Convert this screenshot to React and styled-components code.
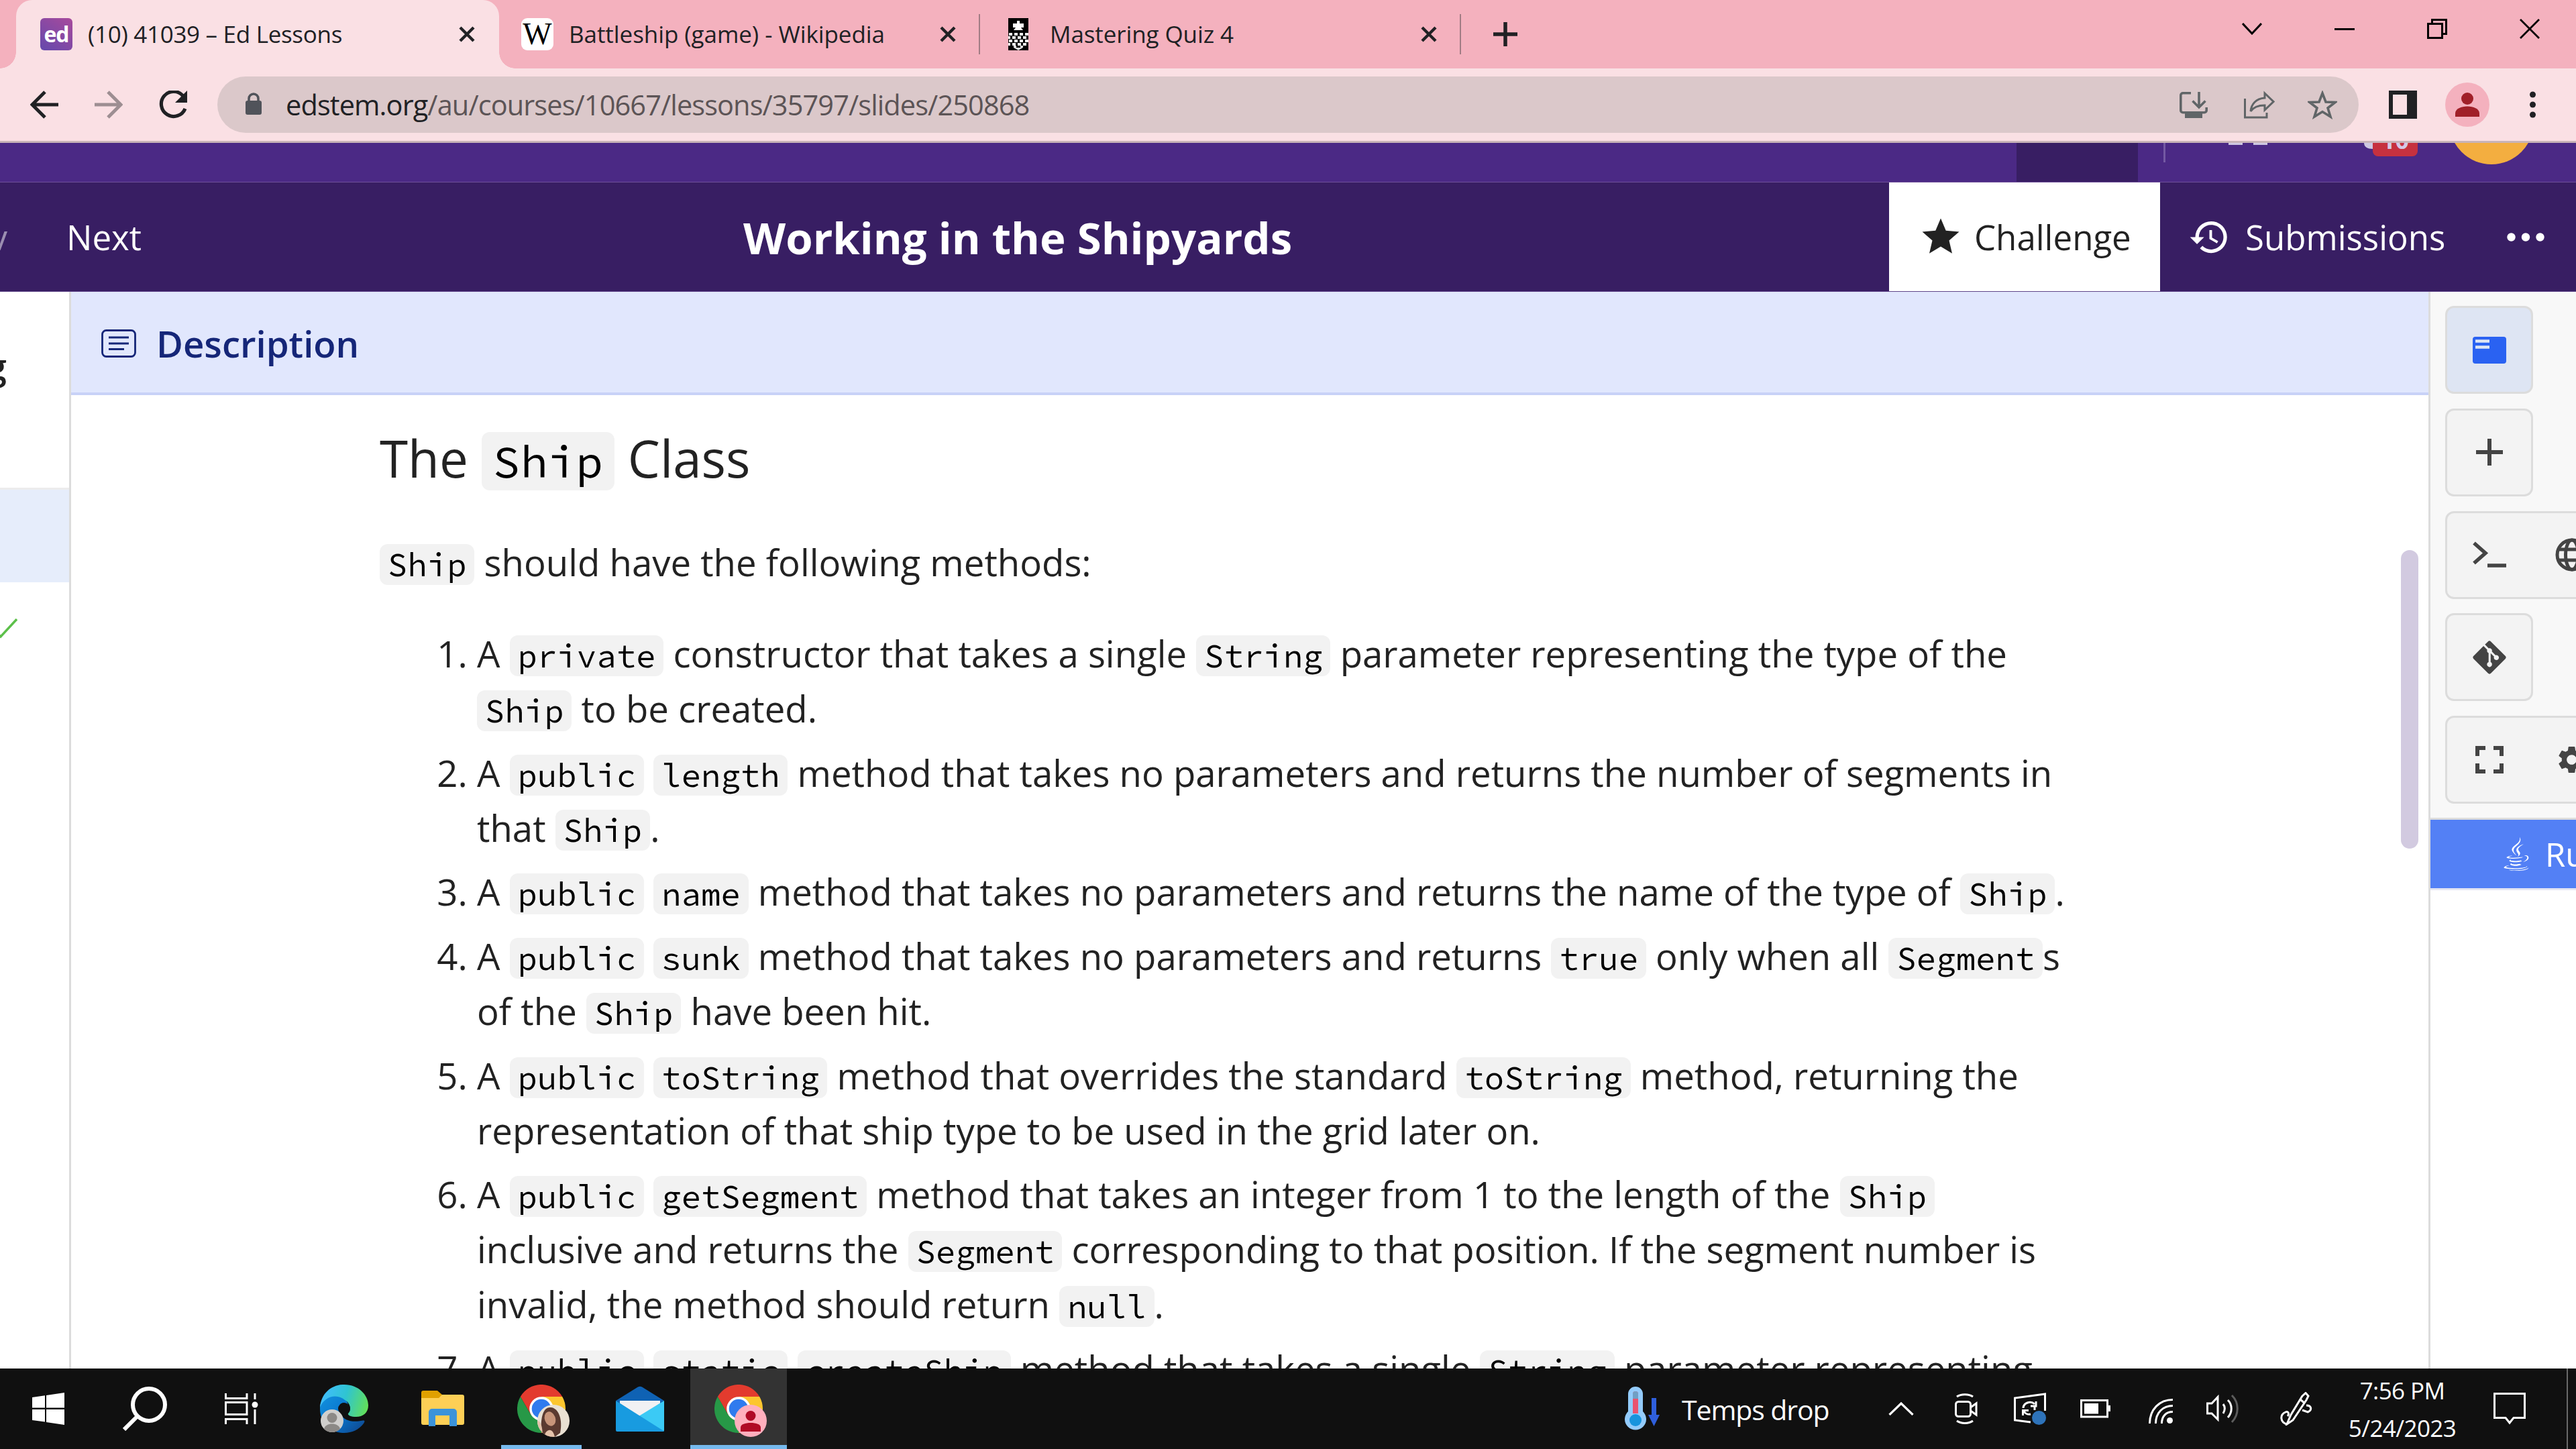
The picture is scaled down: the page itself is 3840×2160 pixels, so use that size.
import React from "react";
import styled, { createGlobalStyle, css } from "styled-components";
import { MdStar, MdHistory, MdSettings } from "react-icons/md";
import { FaGitAlt, FaJava } from "react-icons/fa";

const GlobalStyle = createGlobalStyle`
  * { box-sizing: border-box; }
  html, body { margin: 0; padding: 0; }
  body {
    width: 3840px;
    height: 2160px;
    overflow: hidden;
    background: #fff;
    font-family: "Open Sans", "Noto Sans", sans-serif;
    color: #222;
  }
  svg { display: block; flex: none; }
`;

const gap = css`
    margin-left: ${p => p.$ml || 0}px;
    margin-top: ${p => p.$mt || 0}px;
`;

const Screen = styled.div`
    width: 3840px;
    height: 2160px;
    display: flex;
    flex-direction: column;
    overflow: hidden;
`;

const GlyphSvg = styled.svg`
    ${gap}
`;

const Glyph = ({ w, h, ml, mt, children, ...rest }) => (
    <GlyphSvg width={w} height={h} viewBox={`0 0 ${w} ${h}`} fill="none" $ml={ml} $mt={mt} {...rest}>
        {children}
    </GlyphSvg>
);

/* ---------- browser chrome ---------- */

const TabStrip = styled.div`
    display: flex;
    height: 102px;
    padding-left: 24px;
    background: #f4b1be;
`;

const Tab = styled.div`
    position: relative;
    display: flex;
    align-items: center;
    flex: none;
    width: ${p => (p.$active ? 720 : 717)}px;
    padding: ${p => (p.$active ? "0 36px" : "0 0 0 33px")};
    border-radius: 24px 24px 0 0;
    background: ${p => (p.$active ? "#fae0e4" : "transparent")};

    &::before, &::after {
        content: "";
        display: ${p => (p.$active ? "block" : "none")};
        position: absolute;
        bottom: 0;
        width: 24px;
        height: 24px;
    }
    &::before { left: -24px; background: radial-gradient(circle at 0 0, transparent 23.5px, #fae0e4 24px); }
    &::after { right: -24px; background: radial-gradient(circle at 100% 0, transparent 23.5px, #fae0e4 24px); }
`;

const Favicon = styled.div`
    display: flex;
    align-items: center;
    justify-content: center;
    flex: none;
    width: 48px;
    height: 48px;
    border-radius: 6px;
`;

const EdIcon = styled(Favicon)`
    background: linear-gradient(35deg, #6448ac, #a84a9c);
    color: #fff;
    font-weight: 700;
    font-size: 32px;
    line-height: 48px;
    letter-spacing: -1px;
`;

const WikiIcon = styled(Favicon)`
    border-radius: 9px;
    background: #fff;
    color: #000;
    font-family: "Liberation Serif", serif;
    font-size: 46px;
    line-height: 48px;
`;

const TabTitle = styled.span`
    flex: 1;
    margin: 0 0 1px 23px;
    font-size: 35px;
    line-height: 48px;
    letter-spacing: ${p => p.$ls || 0}px;
    white-space: nowrap;
    color: #202124;
`;

const Separator = styled.div`
    width: 2px;
    height: 60px;
    margin-left: 34px;
    background: #a17c84;
`;

const WindowControls = styled.div`
    display: flex;
    align-items: center;
    gap: 108px;
    height: 86px;
    margin-left: auto;
    padding-right: 54px;
`;

const Toolbar = styled.div`
    display: flex;
    align-items: center;
    height: 111px;
    background: #fae0e4;
    border-bottom: 3px solid #c8b4b8;
`;

const Omnibox = styled.div`
    display: flex;
    align-items: center;
    width: 3192px;
    height: 84px;
    margin-left: 45px;
    padding: 0 32px 0 42px;
    border-radius: 42px;
    background: #dbc8ca;
`;

const Url = styled.span`
    flex: 1;
    margin-left: 36px;
    font-size: 41.5px;
    line-height: 60px;
    letter-spacing: -.9px;
    color: #5c5456;
`;

const Host = styled.span`
    color: #202124;
`;

const ProfileDot = styled.div`
    display: flex;
    justify-content: center;
    width: 66px;
    height: 66px;
    margin-left: 42px;
    padding-top: 14px;
    border-radius: 50%;
    background: #f4b1be;
`;

/* ---------- ed header ---------- */

const Band = styled.div`
    display: flex;
    align-items: flex-start;
    height: 59px;
    background: #4b2985;
    border-bottom: 1px solid #6e4f99;
    overflow: hidden;
`;

const BandBlock = styled.div`
    ${gap}
    width: ${p => p.$w}px;
    height: ${p => p.$h}px;
    background: ${p => p.$color};
`;

const Badge = styled.div`
    height: 20px;
    width: 67px;
    border-radius: 0 0 8px 8px;
    background: #c6313f;
    overflow: hidden;
    text-align: center;
`;

const BadgeCount = styled.span`
    display: block;
    margin-top: -22px;
    font-size: 36px;
    line-height: 36px;
    font-weight: 700;
    color: #d4c9e6;
`;

const Nav = styled.div`
    display: flex;
    align-items: center;
    height: 163px;
    background: #381e63;
    border-bottom: 1px solid #5f4589;
    color: #fff;
    font-size: 51px;
    white-space: nowrap;
`;

const Prev = styled.div`
    display: flex;
    justify-content: flex-end;
    width: 11px;
    overflow: hidden;
    color: #9b8eb1;
`;

const NavText = styled.span`
    ${gap}
`;

const LessonTitle = styled.h1`
    margin: 0 0 0 897px;
    font-size: 65.4px;
    font-weight: 700;
`;

const ChallengeTab = styled.div`
    display: flex;
    align-items: center;
    width: 404px;
    height: 162px;
    margin-left: auto;
    padding-left: 44px;
    background: #fff;
    color: #222;
`;

const Submissions = styled.div`
    display: flex;
    align-items: center;
    width: 620px;
    padding-left: 42px;
`;

/* ---------- lesson body ---------- */

const Main = styled.div`
    display: flex;
    height: 1605px;
    overflow: hidden;
`;

const Slides = styled.div`
    width: 106px;
    border-right: 3px solid #dcdcdc;
    overflow: hidden;
`;

const SlideTitle = styled.div`
    display: flex;
    justify-content: flex-end;
    width: 10px;
    height: 292px;
    padding-top: 73px;
    font-size: 54px;
    line-height: 74px;
    font-weight: 600;
    overflow: hidden;
`;

const CurrentSlide = styled.div`
    height: 141px;
    border-top: 3px solid #ececec;
    background: #e6edfb;
`;

const DocumentPane = styled.div`
    position: relative;
    display: flex;
    flex-direction: column;
    width: 3514px;
    overflow: hidden;
`;

const DescriptionBar = styled.div`
    display: flex;
    align-items: center;
    flex: none;
    height: 154px;
    padding: 3px 0 0 45px;
    background: #e1e7fd;
    border-bottom: 4px solid #c8d2f7;
    color: #152678;
    font-size: 54.5px;
    font-weight: 600;
`;

const Article = styled.div`
    flex: none;
    width: 2984px;
    padding: 48px 0 0 460px;
    font-size: 54.5px;
    line-height: 82px;
    color: #222;
`;

const Heading = styled.h2`
    margin: 0;
    font-size: 76.4px;
    line-height: 90px;
    font-weight: 400;
`;

const Lead = styled.p`
    margin: 70px 0 54px;
`;

const Methods = styled.ol`
    margin: 0;
    padding-left: 145px;
`;

const Method = styled.li`
    & + & { margin-top: 13.7px; }
`;

const Code = styled.code`
    padding: 0 .242em;
    border-radius: 12px;
    background: #f2f2f2;
    color: #000;
    font-family: "Source Code Pro", "Liberation Mono", monospace;
    font-size: .9em;
    line-height: 1;
`;

const ScrollThumb = styled.div`
    position: absolute;
    right: 15px;
    top: 385px;
    width: 26px;
    height: 445px;
    border-radius: 13px;
    background: #d2cae0;
`;

/* ---------- right tool rail ---------- */

const Rail = styled.div`
    width: 220px;
    border-left: 3px solid #dcdcdc;
    overflow: hidden;
`;

const Tools = styled.div`
    display: flex;
    flex-direction: column;
    gap: 21.6px;
    height: 787px;
    padding: 21.4px 0 0 22px;
    background: #f8f8f8;
    border-bottom: 3px solid #dcdcdc;
`;

const ToolGroup = styled.div`
    display: flex;
    width: ${p => (p.$wide ? 260 : 131)}px;
    height: 131px;
    border: 3px solid #dcdcdc;
    border-radius: 13px;
    background: ${p => (p.$active ? "#dee5f3" : "#f3f3f3")};
    color: #444;
`;

const Tool = styled.div`
    display: flex;
    align-items: center;
    justify-content: center;
    flex: none;
    width: 125px;
    & + & { width: 121px; }
`;

const Run = styled.div`
    display: flex;
    align-items: center;
    width: 260px;
    height: 105px;
    padding-left: 103px;
    background: #5380f5;
    border-bottom: 3px solid #e4e5f2;
    color: #fff;
    font-size: 49px;
    line-height: 60px;
`;

/* ---------- windows taskbar ---------- */

const TaskbarRow = styled.div`
    display: flex;
    align-items: center;
    height: 120px;
    background: #101010;
    color: #fff;
    overflow: hidden;
`;

const AppTile = styled.div`
    ${gap}
    display: flex;
    flex: none;
    justify-content: center;
    align-items: center;
    width: ${p => (p.$active ? 144 : 120)}px;
    height: 120px;
    padding-top: 6px;
    background: ${p => (p.$active ? "#333" : "transparent")};
    border-bottom: 6px solid #76b9ed;
`;

const Weather = styled.span`
    flex: none;
    width: 221px;
    margin: 1px 0 0 31px;
    font-size: 41px;
    line-height: 60px;
    letter-spacing: -1.1px;
    white-space: nowrap;
`;

const Clock = styled.div`
    display: flex;
    flex: none;
    flex-direction: column;
    align-items: center;
    width: 200px;
    margin: 2px 0 0 33px;
    font-size: 35px;
    line-height: 56px;
    letter-spacing: -.6px;
    white-space: nowrap;
`;

const ShowDesktop = styled.div`
    flex: none;
    width: 2px;
    height: 120px;
    margin-left: 61px;
    background: #6a6a6a;
`;

const CloseIcon = () => (
    <Glyph w={24} h={24}>
        <path d="M2 2 22 22M22 2 2 22" stroke="#202124" strokeWidth="4.4" />
    </Glyph>
);

// pawn on a chess board
const PawnIcon = () => (
    <Glyph w={30} h={48}>
        <path d="M0 0h30v48H0z" fill="#000" />
        <path d="M13 4h4v4h6v6h-4l3 4H8l3-4H7V8h6z" fill="#fff" />
        {[0, 1, 2, 3].map(row =>
            [0, 1, 2, 3].map(col => (
                <path key={`${row}${col}`} d={`M${1 + col * 8 - (row % 2) * 3} ${22 + row * 5}h5v4h-5z`} fill="#f2f2f2" />
            ))
        )}
        <path d="M8 41h4v3h6v-3h4v3l-7 4-7-4z" fill="#ddd" />
    </Glyph>
);

const ChromeIcon = ({ children }) => (
    <Glyph w={78} h={78} ml={6} mt={6}>
        <path d="M4.8 18A36 36 0 0 1 67.2 18H36L20.4 45z" fill="#e33b2e" />
        <path d="M4.8 18 20.4 45H51.6L36 72A36 36 0 0 1 4.8 18z" fill="#279847" />
        <path d="M36 18H67.2A36 36 0 0 1 36 72L51.6 45z" fill="#fcc62e" />
        <circle cx="36" cy="36" r="17.8" fill="#fff" />
        <circle cx="36" cy="36" r="14.3" fill="#2f7bee" />
        {children}
    </Glyph>
);

function BrowserChrome() {
    return (
        <>
            <TabStrip>
                <Tab $active>
                    <EdIcon>ed</EdIcon>
                    <TabTitle $ls={-.3}>(10) 41039 – Ed Lessons</TabTitle>
                    <CloseIcon />
                </Tab>
                <Tab>
                    <WikiIcon>W</WikiIcon>
                    <TabTitle $ls={-.06}>Battleship (game) - Wikipedia</TabTitle>
                    <CloseIcon />
                    <Separator />
                </Tab>
                <Tab>
                    <Favicon><PawnIcon /></Favicon>
                    <TabTitle $ls={-.1}>Mastering Quiz 4</TabTitle>
                    <CloseIcon />
                    <Separator />
                </Tab>
                <Glyph w={36} h={36} ml={48} mt={33}>
                    <path d="M18 0V36M0 18H36" stroke="#202124" strokeWidth="5.5" />
                </Glyph>
                <WindowControls>
                    <Glyph w={30} h={18}><path d="M1 1 15 16 29 1" stroke="#000" strokeWidth="3" /></Glyph>
                    <Glyph w={30} h={3}><path d="M0 0H30V3H0z" fill="#000" /></Glyph>
                    <Glyph w={30} h={30}>
                        <path d="M1.5 7.5H22.5V28.5H1.5zM7.5 7V1.5H28.5V22.5H23" stroke="#000" strokeWidth="3" />
                    </Glyph>
                    <Glyph w={30} h={30}><path d="M1 1 29 29M29 1 1 29" stroke="#000" strokeWidth="2.8" /></Glyph>
                </WindowControls>
            </TabStrip>
            <Toolbar>
                <Glyph w={42} h={42} ml={45}>
                    <path d="M22 2 3 21 22 40M3 21H42" stroke="#202124" strokeWidth="5" />
                </Glyph>
                <Glyph w={42} h={42} ml={54}>
                    <path d="M20 2 39 21 20 40M39 21H0" stroke="#9d8e92" strokeWidth="5" />
                </Glyph>
                <Glyph w={42} h={42} ml={54}>
                    <path d="M36 8A18.500 18.500 0 1 0 39 27" stroke="#202124" strokeWidth="5.2" />
                    <path d="M42 0V18H24z" fill="#202124" />
                </Glyph>
                <Omnibox>
                    <Glyph w={24} h={33} mt={-3}>
                        <path d="M0 15a3 3 0 0 1 3-3h18a3 3 0 0 1 3 3v15a3 3 0 0 1-3 3H3a3 3 0 0 1-3-3z" fill="#50535a" />
                        <path d="M5 13V9a7 7 0 0 1 14 0v4" stroke="#50535a" strokeWidth="3.5" />
                    </Glyph>
                    <Url><Host>edstem.org</Host>/au/courses/10667/lessons/35797/slides/250868</Url>
                    <Glyph w={42} h={39}>
                        <path d="M17 1.800H5a3.200 3.200 0 0 0-3.200 3.200V27.500A3.200 3.200 0 0 0 5 30.700H37A3.200 3.200 0 0 0 40.200 27.500V23" stroke="#606567" strokeWidth="3.6" />
                        <path d="M29 0V22M19.500 13.500 29 23 38.500 13.500" stroke="#606567" strokeWidth="3.6" />
                        <path d="M8 31H34V39H8z" fill="#606567" />
                    </Glyph>
                    <Glyph w={46} h={42} ml={54}>
                        <path d="M1.500 12V40H34V33" stroke="#606567" strokeWidth="3" />
                        <path d="M31 4 44 16.500 31 29V22C21 22 14 25 10 31 11 20 18 12 31 11z" stroke="#606567" strokeWidth="3" />
                    </Glyph>
                    <Glyph w={44} h={43} ml={49}>
                        <path d="M22 4 27 17 41 17.500 30 26 34 39 22 31.500 10 39 14 26 3 17.500 17 17z" stroke="#606567" strokeWidth="3.6" />
                    </Glyph>
                </Omnibox>
                <Glyph w={42} h={42} ml={45}>
                    <path d="M0 0H42V42H0zM6 6V36H27V6z" fill="#202124" fillRule="evenodd" />
                </Glyph>
                <ProfileDot>
                    <Glyph w={36} h={38}>
                        <circle cx="18" cy="10" r="9" fill="#a01f28" />
                        <path d="M0 37V32C0 25 9 21.500 18 21.500S36 25 36 32V37z" fill="#a01f28" />
                    </Glyph>
                </ProfileDot>
                <Glyph w={9} h={40} ml={60}>
                    {[5, 20, 35].map(y => <circle key={y} cx="4.5" cy={y} r="4.5" fill="#202124" />)}
                </Glyph>
            </Toolbar>
        </>
    );
}

function EdHeader() {
    return (
        <>
            <Band>
                <BandBlock $ml={3006} $w={181} $h={58} $color="#381e63" />
                <BandBlock $ml={38} $w={3} $h={29} $color="#7459a3" />
                <BandBlock $ml={94} $w={21} $h={3} $color="#cfc8e2" />
                <BandBlock $ml={16} $w={21} $h={3} $color="#cfc8e2" />
                <Glyph w={13} h={9} ml={144}><path d="M0 0H13V9C5 9 0 6 0 0z" fill="#cfc8e2" /></Glyph>
                <Badge><BadgeCount>10</BadgeCount></Badge>
                <Glyph w={126} h={33} ml={47}><circle cx="63" cy="-31" r="63" fill="#f3ae40" /></Glyph>
            </Band>
            <Nav>
                <Prev>Prev</Prev>
                <NavText $ml={88}>Next</NavText>
                <LessonTitle>Working in the Shipyards</LessonTitle>
                <ChallengeTab>
                    <MdStar size={66} />
                    <NavText $ml={17}>Challenge</NavText>
                </ChallengeTab>
                <Submissions>
                    <MdHistory size={63} />
                    <NavText $ml={22}>Submissions</NavText>
                    <Glyph w={56} h={13} ml={92}>
                        {[6.5, 28, 49.5].map(x => <circle key={x} cx={x} cy="6.5" r="6.2" fill="#fff" />)}
                    </Glyph>
                </Submissions>
            </Nav>
        </>
    );
}

function Description() {
    return (
        <DocumentPane>
            <DescriptionBar>
                <Glyph w={52} h={42}>
                    <rect x="1.5" y="1.5" width="49" height="39" rx="6" stroke="#152678" strokeWidth="2.8" />
                    <path d="M11 12H41M11 21H41M11 29.500H34" stroke="#152678" strokeWidth="2.8" />
                </Glyph>
                <NavText $ml={30}>Description</NavText>
            </DescriptionBar>
            <Article>
                <Heading>The <Code>Ship</Code> Class</Heading>
                <Lead><Code>Ship</Code> should have the following methods:</Lead>
                <Methods>
                    <Method>A <Code>private</Code> constructor that takes a single <Code>String</Code> parameter representing the type of the <Code>Ship</Code> to be created.</Method>
                    <Method>A <Code>public</Code> <Code>length</Code> method that takes no parameters and returns the number of segments in that <Code>Ship</Code>.</Method>
                    <Method>A <Code>public</Code> <Code>name</Code> method that takes no parameters and returns the name of the type of <Code>Ship</Code>.</Method>
                    <Method>A <Code>public</Code> <Code>sunk</Code> method that takes no parameters and returns <Code>true</Code> only when all <Code>Segment</Code>s of the <Code>Ship</Code> have been hit.</Method>
                    <Method>A <Code>public</Code> <Code>toString</Code> method that overrides the standard <Code>toString</Code> method, returning the representation of that ship type to be used in the grid later on.</Method>
                    <Method>A <Code>public</Code> <Code>getSegment</Code> method that takes an integer from 1 to the length of the <Code>Ship</Code> inclusive and returns the <Code>Segment</Code> corresponding to that position. If the segment number is invalid, the method should return <Code>null</Code>.</Method>
                    <Method>A <Code>public</Code> <Code>static</Code> <Code>createShip</Code> method that takes a single <Code>String</Code> parameter representing</Method>
                </Methods>
            </Article>
            <ScrollThumb />
        </DocumentPane>
    );
}

function ToolRail() {
    return (
        <Rail>
            <Tools>
                <ToolGroup $active>
                    <Tool>
                        <Glyph w={50} h={40}>
                            <rect width="50" height="40" rx="4" fill="#2a62f2" />
                            <path d="M4 6.500H25M4 15.500H25" stroke="#dee5f3" strokeWidth="4.5" />
                        </Glyph>
                    </Tool>
                </ToolGroup>
                <ToolGroup>
                    <Tool>
                        <Glyph w={40} h={40}><path d="M20 0V40M0 20H40" stroke="#444" strokeWidth="6" /></Glyph>
                    </Tool>
                </ToolGroup>
                <ToolGroup $wide>
                    <Tool>
                        <Glyph w={50} h={42}>
                            <path d="M2 3.500 19 18.500 2 33.500" stroke="#444" strokeWidth="5.5" />
                            <path d="M22 37H50" stroke="#444" strokeWidth="5.5" />
                        </Glyph>
                    </Tool>
                    <Tool>
                        <Glyph w={50} h={50} stroke="#444" strokeWidth="5">
                            <circle cx="25" cy="25" r="22" />
                            <ellipse cx="25" cy="25" rx="9.5" ry="22" />
                            <path d="M4 17H46M4 33H46" />
                        </Glyph>
                    </Tool>
                </ToolGroup>
                <ToolGroup>
                    <Tool><FaGitAlt size={56} /></Tool>
                </ToolGroup>
                <ToolGroup $wide>
                    <Tool>
                        <Glyph w={42} h={41}>
                            <path d="M3 15V3H15M27 3H39V15M39 26V38H27M15 38H3V26" stroke="#444" strokeWidth="6" />
                        </Glyph>
                    </Tool>
                    <Tool><MdSettings size={49} /></Tool>
                </ToolGroup>
            </Tools>
            <Run>
                <FaJava size={50} />
                <NavText $ml={18}>Run</NavText>
            </Run>
        </Rail>
    );
}

function Taskbar() {
    return (
        <TaskbarRow>
            <Glyph w={48} h={48} ml={48}>
                <path d="M0 7 19 4.300V22.500H0zM21 4 48 0V22.500H21zM0 25H19V43.500L0 41zM21 25H48V48L21 44z" fill="#fff" />
            </Glyph>
            <Glyph w={66} h={66} ml={87}>
                <circle cx="39" cy="27" r="24" stroke="#fff" strokeWidth="6" />
                <path d="M22 44 2 64" stroke="#fff" strokeWidth="6" />
            </Glyph>
            <Glyph w={50} h={46} ml={86}>
                <path d="M1.500 0V7.500H33V0M1.500 13.500H33V31.500H1.500zM1.500 46V38.500H33V46M45 0V9M45 24V46" stroke="#fff" strokeWidth="3" />
                <circle cx="45" cy="17" r="4.5" fill="#fff" />
            </Glyph>
            <Glyph w={72} h={72} ml={92}>
                <defs>
                    <linearGradient id="edgeTop" x1="0" y1="0.4" x2="1" y2="0.6">
                        <stop offset="0" stopColor="#41bdff" />
                        <stop offset=".5" stopColor="#2fc4d2" />
                        <stop offset="1" stopColor="#62e05a" />
                    </linearGradient>
                    <linearGradient id="edgeBase" x1="0" y1="0" x2="1" y2="1">
                        <stop offset="0" stopColor="#1493dd" />
                        <stop offset=".5" stopColor="#0876cf" />
                        <stop offset="1" stopColor="#114387" />
                    </linearGradient>
                </defs>
                <path d="M0 36C0 22 10 12 22 14 34 16 42 24 42 32L28 36C30 50 42 58 64 53.500 67 53 67 55 65 58 58 67 48 72 36 72 14 72 0 56 0 36z" fill="url(#edgeBase)" />
                <path d="M0 34C2 12 18 0 36 0 58 0 72 16 72 31 72 42 64 48 54 48 45 48 41 45 42 43 47 38 46 28 37 23 25 13 7 17 0 34z" fill="url(#edgeTop)" />
                <circle cx="36" cy="36" r="9" fill="#101010" />
                <circle cx="18" cy="54" r="17" fill="#d0cfcd" />
                <circle cx="18" cy="49.5" r="7.5" fill="#8c8986" />
                <path d="M6 66C8 56 28 56 30 66 24 72.500 12 72.500 6 66z" fill="#8c8986" />
            </Glyph>
            <Glyph w={64} h={54} ml={79}>
                <path d="M0 3a3 3 0 0 1 3-3H24L31 6V20H0z" fill="#e0a000" />
                <path d="M0 11H26L31 6H61a3 3 0 0 1 3 3V48a3 3 0 0 1-3 3H3a3 3 0 0 1-3-3z" fill="#fdcf56" />
                <path d="M11 53V32a5 5 0 0 1 5-5H48a5 5 0 0 1 5 5V53H42V37H21V53z" fill="#3b93da" />
            </Glyph>
            <AppTile $ml={55}>
                <ChromeIcon>
                    <clipPath id="face"><circle cx="54" cy="54" r="24" /></clipPath>
                    <g clipPath="url(#face)">
                        <path d="M30 30H78V78H30z" fill="#e9e0d2" />
                        <path d="M36 78C34 50 38 33 50 34 62 35 68 52 64 72L56 78z" fill="#5b3a30" />
                        <ellipse cx="49" cy="51" rx="8" ry="11" fill="#c8957a" transform="rotate(-20 49 51)" />
                        <path d="M30 54C36 54 38 66 38 78H30zM42 72C48 64 54 68 56 78H40z" fill="#e4c3ab" />
                    </g>
                </ChromeIcon>
            </AppTile>
            <Glyph w={72} h={68} ml={51}>
                <path d="M0 22 33 1.500Q36 0 39 1.500L72 22 36 46z" fill="#0f62b4" />
                <path d="M6 22H66V26L36 46 6 26z" fill="#f1f1f3" />
                <path d="M72 22V66a2 2 0 0 1-2 2H2L36 44z" fill="#3bcaf5" />
                <path d="M0 22 72 67.500 70 68H2a2 2 0 0 1-2-2z" fill="#189be0" />
            </Glyph>
            <AppTile $active $ml={39}>
                <ChromeIcon>
                    <circle cx="54" cy="54" r="24" fill="#ffafbd" />
                    <circle cx="54" cy="46.5" r="7.5" fill="#b00a25" />
                    <path d="M39 70V64C39 59 46 57 54 57S69 59 69 64V70z" fill="#b00a25" />
                </ChromeIcon>
            </AppTile>
            <Glyph w={54} h={66} ml={1249}>
                <path d="M16 0a11 11 0 0 1 11 11V37a16 16 0 1 1-22 0V11A11 11 0 0 1 16 0z" fill="#93cbfb" />
                <path d="M12 11a4 4 0 0 1 8 0V40h-8z" fill="#e9536f" />
                <path d="M12 11a4 4 0 0 1 8 0V18h-8z" fill="#709fc4" />
                <circle cx="16" cy="50" r="9" fill="#1794dd" />
                <path d="M40 17h7V42h5L43.500 59 35 42h5z" fill="#2f5fdc" />
            </Glyph>
            <Weather>Temps drop</Weather>
            <Glyph w={38} h={20} ml={87}>
                <path d="M1.500 19 19 2 36.500 19" stroke="#fff" strokeWidth="3.2" />
            </Glyph>
            <Glyph w={34} h={46} ml={61} stroke="#fff" strokeWidth="3">
                <rect x="1.5" y="12.5" width="22" height="22" rx="4" />
                <path d="M23.500 21 32 15V32L23.500 26M3 5C9 .500 21 .500 27 5M3 41C9 45.500 21 45.500 27 41" />
            </Glyph>
            <Glyph w={49} h={48} ml={54} stroke="#fff" strokeWidth="3">
                <path d="M25 44 1.500 41V8L46.500 2V27M14 23A10 9 0 0 1 31 17M31 26V19M25 20H33V13M25 32A9 9 0 0 1 15 28M13.500 34V26.500H22" />
                <circle cx="37.5" cy="37.5" r="10.5" fill="#2e73ba" stroke="none" />
            </Glyph>
            <Glyph w={45} h={28} ml={50}>
                <path d="M1.500 1.500H40.500V26H1.500z" stroke="#fff" strokeWidth="3" />
                <path d="M6 6H27V21.500H6zM41 9H45V18H41z" fill="#fff" />
            </Glyph>
            <Glyph w={37} h={37} ml={57} mt={6} stroke="#fff" strokeWidth="3">
                <path d="M1.500 37C1.500 16 16 1.500 36 1.500M10.500 37C10.500 21 21 10.500 36 10.500M19.500 37C19.500 26 26 19.500 36 19.500" />
                <circle cx="31.5" cy="32.5" r="4.5" fill="#fff" stroke="none" />
            </Glyph>
            <Glyph w={49} h={44} ml={49} stroke="#fff" strokeWidth="3">
                <path d="M1.500 14H8L17 4.500V38L8 29H1.500zM25 15C28 19 28 24 25 29M32 9C39 16 39 27 32 35" />
                <path d="M38 2C49 13 49 30 38 42" stroke="#5c5c5c" />
            </Glyph>
            <Glyph w={50} h={50} ml={60} stroke="#fff" strokeWidth="3">
                <path d="M34 6 39 1.500 43 6 40 12 20 42 11 48 17 34zM32 12 38 17M11 48C1 45 0 34 9 30 13 28 15 33 12 36M40 20C48 20 49 27 42 30L34 27" />
            </Glyph>
            <Clock>
                <span>7:56 PM</span>
                <span>5/24/2023</span>
            </Clock>
            <Glyph w={48} h={48} ml={36}>
                <path d="M1.500 1.500H46.500V37.500H30L24 45 18 37.500H1.500z" stroke="#fff" strokeWidth="3" />
            </Glyph>
            <ShowDesktop />
        </TaskbarRow>
    );
}

export default function App() {
    return (
        <>
            <GlobalStyle />
            <Screen>
                <BrowserChrome />
                <EdHeader />
                <Main>
                    <Slides>
                        <SlideTitle>Marking</SlideTitle>
                        <CurrentSlide />
                        <Glyph w={27} h={30} mt={54}><path d="M25 1 1 27-6 20" stroke="#5cc04a" strokeWidth="3.5" /></Glyph>
                    </Slides>
                    <Description />
                    <ToolRail />
                </Main>
                <Taskbar />
            </Screen>
        </>
    );
}
